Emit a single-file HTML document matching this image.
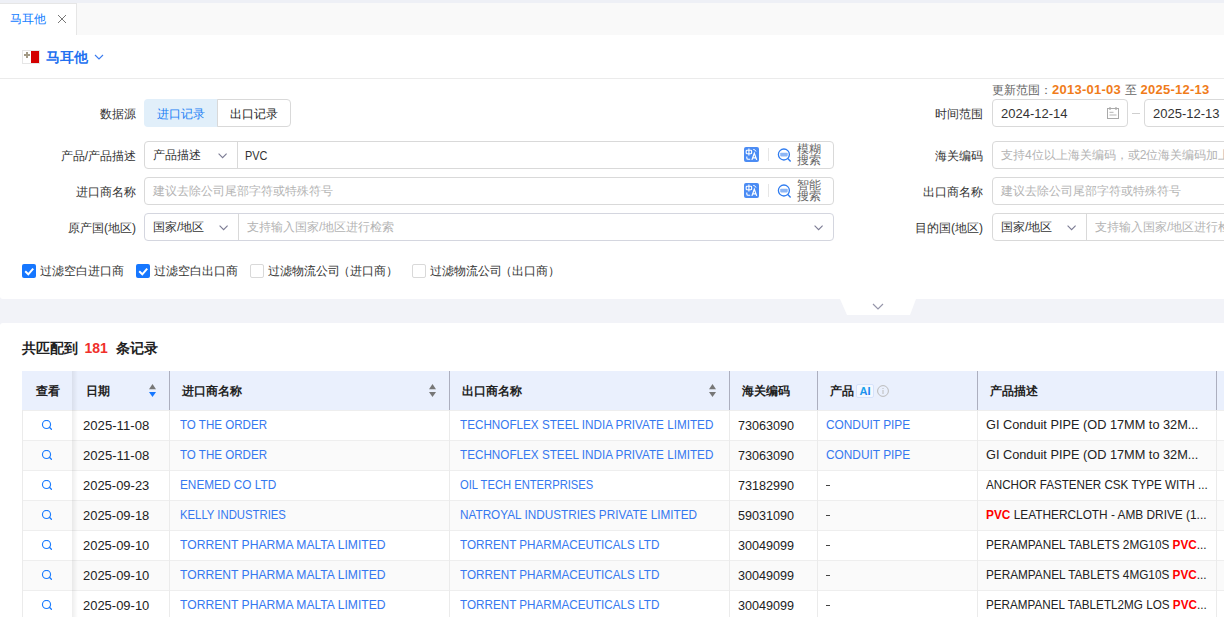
<!DOCTYPE html>
<html><head><meta charset="utf-8">
<style>
*{box-sizing:border-box;margin:0;padding:0}
html,body{width:1224px;height:617px;overflow:hidden;background:#fff}
body{position:relative;font-family:"Liberation Sans",sans-serif;font-size:12px;color:#333}
.a{position:absolute;white-space:nowrap}
.lbl{position:absolute;white-space:nowrap;font-size:12px;color:#333;line-height:14px;text-align:right}
.box{position:absolute;border:1px solid #d9d9d9;border-radius:4px;background:#fff}
.ph{color:#b3b3b3}
.chev{position:absolute;width:6px;height:6px;border-right:1px solid #999;border-bottom:1px solid #999;transform:rotate(45deg)}
.cb{position:absolute;width:14px;height:14px;border-radius:2px}
.cb.on{background:#1677ff}
.cb.off{border:1px solid #d9d9d9;background:#fff}


.tr{position:absolute;width:15px;height:15px;border-radius:2px;background:#3b82e8}
.sq{position:absolute;width:16px;height:16px}
.st{position:absolute;font-size:12px;line-height:11px;color:#666}
.cal{position:absolute;width:11px;height:12px;border:1px solid #aaa;border-radius:1px}
.t{font-size:13px;line-height:15px;transform-origin:0 0}
.th{font-size:12px;line-height:14px;font-weight:700;color:#222}
</style></head><body>

<!-- top tab strip -->
<div class="a" style="left:0;top:0;width:1224px;height:3px;background:#eef0f6"></div>
<div class="a" style="left:0;top:3px;width:1224px;height:32px;background:#f9f9f9"></div>
<div class="a" style="left:0;top:3px;width:77px;height:32px;background:#fff;border-right:1px solid #e6e6e6;border-top:1px solid #e6e6e6"></div>
<div class="a" style="left:10px;top:12px;font-size:12px;line-height:14px;color:#0f7bff">马耳他</div>
<svg class="a" style="left:57px;top:14px" width="10" height="10"><path d="M1 1 L9 9 M9 1 L1 9" stroke="#777" stroke-width="1"/></svg>

<!-- header -->
<div class="a" style="left:22px;top:50px;width:18px;height:14px;background:#fff;border:1px solid #e6e6e6"></div>
<div class="a" style="left:31px;top:51px;width:8px;height:12px;background:#d40000"></div>
<div class="a" style="left:25.5px;top:52px;width:2px;height:6px;background:#a39a86"></div>
<div class="a" style="left:23.5px;top:54px;width:6px;height:2px;background:#a39a86"></div>
<svg class="a" style="left:94px;top:54px" width="10" height="7"><path d="M1 1 L5 5 L9 1" stroke="#3a7cf0" stroke-width="1.1" fill="none"/></svg>
<div class="a" style="left:46px;top:49px;font-size:14px;line-height:16px;font-weight:700;color:#2270f0">马耳他</div>
<div class="a" style="left:0;top:78px;width:1224px;height:1px;background:#ebebeb"></div>


<!-- FORM -->
<div class="lbl" style="right:1088px;top:106.5px">数据源</div>
<div class="a" style="left:144px;top:99px;width:74px;height:28px;background:#e1effa;border-radius:4px 0 0 4px"></div>
<div class="a" style="left:217px;top:99px;width:74px;height:28px;border:1px solid #d9d9d9;border-radius:0 4px 4px 0;background:#fff"></div>
<div class="a" style="left:157px;top:106.5px;line-height:14px;color:#1a80f5">进口记录</div>
<div class="a" style="left:230px;top:106.5px;line-height:14px;color:#222">出口记录</div>

<div class="lbl" style="right:1088px;top:148.5px">产品/产品描述</div>
<div class="box" style="left:144px;top:141px;width:690px;height:28px">
  <div class="a" style="left:8px;top:6px;line-height:14px;color:#333">产品描述</div>
  <svg class="a" style="left:72.5px;top:10.5px" width="10" height="6"><path d="M0.6 0.6 L4.6 4.6 L8.6 0.6" stroke="#7c7c94" stroke-width="1.1" fill="none"/></svg>
  <div class="a" style="left:92px;top:0;width:1px;height:26px;background:#d9d9d9"></div>
  <div class="a" style="left:100px;top:6px;line-height:15px;font-size:13px;color:#333;transform:scaleX(0.84);transform-origin:0 0">PVC</div>
  <svg class="a" style="left:599px;top:5px" width="15" height="15"><rect x="0" y="0" width="15" height="15" rx="2" fill="#4b8cf4"/><rect x="2.2" y="3.3" width="5.4" height="3.4" rx="0.8" fill="none" stroke="#fff" stroke-width="1.1"/><path d="M4.9 1.6 V8.6" stroke="#fff" stroke-width="1.1"/><path d="M2.8 9.6 V10.9 Q2.8 12.2 4.1 12.2 H6.2" stroke="#fff" stroke-width="1.1" fill="none"/><path d="M7.9 12.9 L10.3 6.3 L12.7 12.9 M8.7 10.8 H11.9" stroke="#fff" stroke-width="1.25" fill="none"/><path d="M9.2 2.4 Q11.4 2.4 12 4.6" stroke="#fff" stroke-width="0.9" fill="none"/></svg>
  <div class="a" style="left:623px;top:6px;width:1px;height:13px;background:#e6e6e6"></div>
  <svg class="a" style="left:631px;top:4.5px" width="17" height="17"><circle cx="7.9" cy="7.5" r="5.5" stroke="#2f7cf0" stroke-width="1.3" fill="none"/><rect x="4.2" y="5.8" width="7.5" height="3.6" rx="0.8" fill="#8db6f5"/><path d="M11.8 11.6 L14.6 14.4" stroke="#2f7cf0" stroke-width="1.4"/></svg>
  <div class="st" style="left:652px;top:2px">模糊<br>搜索</div>
</div>

<div class="lbl" style="right:1088px;top:184.5px">进口商名称</div>
<div class="box" style="left:144px;top:177px;width:690px;height:28px">
  <div class="a ph" style="left:8px;top:6px;line-height:14px">建议去除公司尾部字符或特殊符号</div>
  <svg class="a" style="left:599px;top:5px" width="15" height="15"><rect x="0" y="0" width="15" height="15" rx="2" fill="#4b8cf4"/><rect x="2.2" y="3.3" width="5.4" height="3.4" rx="0.8" fill="none" stroke="#fff" stroke-width="1.1"/><path d="M4.9 1.6 V8.6" stroke="#fff" stroke-width="1.1"/><path d="M2.8 9.6 V10.9 Q2.8 12.2 4.1 12.2 H6.2" stroke="#fff" stroke-width="1.1" fill="none"/><path d="M7.9 12.9 L10.3 6.3 L12.7 12.9 M8.7 10.8 H11.9" stroke="#fff" stroke-width="1.25" fill="none"/><path d="M9.2 2.4 Q11.4 2.4 12 4.6" stroke="#fff" stroke-width="0.9" fill="none"/></svg>
  <div class="a" style="left:623px;top:6px;width:1px;height:13px;background:#e6e6e6"></div>
  <svg class="a" style="left:631px;top:4.5px" width="17" height="17"><circle cx="7.9" cy="7.5" r="5.5" stroke="#2f7cf0" stroke-width="1.3" fill="none"/><rect x="4.2" y="5.8" width="7.5" height="3.6" rx="0.8" fill="#8db6f5"/><path d="M11.8 11.6 L14.6 14.4" stroke="#2f7cf0" stroke-width="1.4"/></svg>
  <div class="st" style="left:652px;top:2px">智能<br>搜索</div>
</div>

<div class="lbl" style="right:1088px;top:220.5px">原产国(地区)</div>
<div class="box" style="left:144px;top:213px;width:690px;height:28px;border-color:#d4d6df">
  <div class="a" style="left:8px;top:6px;line-height:14px;color:#333">国家/地区</div>
  <svg class="a" style="left:73.5px;top:10.5px" width="10" height="6"><path d="M0.6 0.6 L4.6 4.6 L8.6 0.6" stroke="#7c7c94" stroke-width="1.1" fill="none"/></svg>
  <div class="a" style="left:93px;top:0;width:1px;height:26px;background:#d9d9d9"></div>
  <div class="a ph" style="left:102px;top:6px;line-height:14px">支持输入国家/地区进行检索</div>
  <svg class="a" style="left:668.5px;top:10.5px" width="10" height="6"><path d="M0.6 0.6 L4.6 4.6 L8.6 0.6" stroke="#7c7c94" stroke-width="1.1" fill="none"/></svg>
</div>

<!-- right column -->
<div class="a" style="left:992px;top:83px;line-height:14px;color:#666">更新范围<span style="margin-right:-4px">：</span></div>
<div class="a" style="left:1052px;top:82px;line-height:15px;font-size:13px;font-weight:700;color:#f07c1a;letter-spacing:0.25px">2013-01-03</div>
<div class="a" style="left:1125px;top:83px;line-height:14px;color:#666">至</div>
<div class="a" style="left:1140.5px;top:82px;line-height:15px;font-size:13px;font-weight:700;color:#f07c1a;letter-spacing:0.25px">2025-12-13</div>
<div class="lbl" style="right:241px;top:106.5px">时间范围</div>
<div class="box" style="left:992px;top:99px;width:136px;height:28px">
  <div class="a" style="left:8px;top:7px;line-height:14px;font-size:13px;color:#333">2024-12-14</div>
  <svg class="a" style="left:114px;top:7px" width="13" height="13"><rect x="0.5" y="1.5" width="11" height="10" fill="none" stroke="#aaa" stroke-width="1"/><path d="M3 0 V3 M9 0 V3" stroke="#aaa" stroke-width="1.2"/><path d="M2.5 5.3 H6.5 M2.5 8 H9.5" stroke="#b5b5b5" stroke-width="1"/></svg>
</div>
<div class="a" style="left:1132px;top:113px;width:8px;height:1px;background:#cfcfcf"></div>
<div class="box" style="left:1144px;top:99px;width:140px;height:28px">
  <div class="a" style="left:8px;top:7px;line-height:14px;font-size:13px;color:#333">2025-12-13</div>
</div>

<div class="lbl" style="right:241px;top:148.5px">海关编码</div>
<div class="box" style="left:992px;top:141px;width:300px;height:28px">
  <div class="a ph" style="left:8px;top:6px;line-height:14px">支持4位以上海关编码，或2位海关编码加上产品描述</div>
</div>
<div class="lbl" style="right:241px;top:184.5px">出口商名称</div>
<div class="box" style="left:992px;top:177px;width:300px;height:28px">
  <div class="a ph" style="left:8px;top:6px;line-height:14px">建议去除公司尾部字符或特殊符号</div>
</div>
<div class="lbl" style="right:241px;top:220.5px">目的国(地区)</div>
<div class="box" style="left:992px;top:213px;width:300px;height:28px">
  <div class="a" style="left:8px;top:6px;line-height:14px;color:#333">国家/地区</div>
  <svg class="a" style="left:73.5px;top:10.5px" width="10" height="6"><path d="M0.6 0.6 L4.6 4.6 L8.6 0.6" stroke="#7c7c94" stroke-width="1.1" fill="none"/></svg>
  <div class="a" style="left:93px;top:0;width:1px;height:26px;background:#d9d9d9"></div>
  <div class="a ph" style="left:102px;top:6px;line-height:14px">支持输入国家/地区进行检索</div>
</div>

<!-- checkboxes -->
<svg class="a" style="left:22px;top:264px" width="14" height="14"><rect width="14" height="14" rx="2" fill="#1677ff"/><path d="M3.2 7.3 L6.3 10.3 L11.2 4.6" stroke="#fff" stroke-width="2" fill="none"/></svg>
<div class="a" style="left:40px;top:264px;line-height:14px;color:#333">过滤空白进口商</div>
<svg class="a" style="left:136px;top:264px" width="14" height="14"><rect width="14" height="14" rx="2" fill="#1677ff"/><path d="M3.2 7.3 L6.3 10.3 L11.2 4.6" stroke="#fff" stroke-width="2" fill="none"/></svg>
<div class="a" style="left:154px;top:264px;line-height:14px;color:#333">过滤空白出口商</div>
<div class="cb off" style="left:250px;top:264px"></div>
<div class="a" style="left:268px;top:264px;line-height:14px;color:#333">过滤物流公司<span style="margin-left:-2px">（</span>进口商）</div>
<div class="cb off" style="left:412px;top:264px"></div>
<div class="a" style="left:430px;top:264px;line-height:14px;color:#333">过滤物流公司<span style="margin-left:-2px">（</span>出口商）</div>

<!-- gray band -->
<div class="a" style="left:0;top:295px;width:1224px;height:32px;background:#f2f3f8"></div>
<div class="a" style="left:0;top:291px;width:1230px;height:8px;background:#fff;border-radius:0 0 0 3px"></div>
<div class="a" style="left:0;top:323px;width:1230px;height:8px;background:#fff;border-radius:3px 0 0 0"></div>
<svg class="a" style="left:838px;top:299px" width="80" height="17"><path d="M2 0 L78 0 L72 16 L9 16 Z" fill="#fff"/><path d="M35 5 L40 10 L45 5" stroke="#9696aa" stroke-width="1.2" fill="none"/></svg>


<!-- results panel -->
<div class="a" style="left:22px;top:340px;font-size:14px;line-height:16px;font-weight:700;color:#222">共匹配到</div>
<div class="a" style="left:84.5px;top:340px;font-size:14px;line-height:16px;font-weight:700;color:#f0302a">181</div>
<div class="a" style="left:116px;top:340px;font-size:14px;line-height:16px;font-weight:700;color:#222">条记录</div>

<!-- table header -->
<div class="a" style="left:22px;top:371px;width:1202px;height:39px;background:#eaf0fd"></div>
<!--ROWS-->
<div class="a" style="left:22px;top:411px;width:1202px;height:30px;background:#fff;border-bottom:1px solid #eeeeee"></div>
<svg class="a" style="left:41px;top:420px" width="12" height="11"><circle cx="5.5" cy="4.4" r="4.05" stroke="#1a7cff" stroke-width="1.15" fill="none"/><path d="M8.4 7.3 L10.4 9.3" stroke="#1a7cff" stroke-width="1.3" stroke-linecap="round"/></svg>
<div class="a t" style="left:82.5px;top:418px;color:#222;transform:scaleX(1.011)">2025-11-08</div>
<div class="a t" style="left:180.3px;top:417px;color:#3578f0;transform:scaleX(0.890)">TO THE ORDER</div>
<div class="a t" style="left:460.3px;top:417px;color:#3578f0;transform:scaleX(0.900)">TECHNOFLEX STEEL INDIA PRIVATE LIMITED</div>
<div class="a t" style="left:738.2px;top:418px;color:#222;transform:scaleX(0.970)">73063090</div>
<div class="a t" style="left:826.2px;top:417px;color:#3578f0;transform:scaleX(0.913)">CONDUIT PIPE</div>
<div class="a t" style="left:986.3px;top:417px;color:#222;transform:scaleX(0.980)">GI Conduit PIPE (OD 17MM to 32M...</div>
<div class="a" style="left:22px;top:441px;width:1202px;height:30px;background:#fafafa;border-bottom:1px solid #eeeeee"></div>
<svg class="a" style="left:41px;top:450px" width="12" height="11"><circle cx="5.5" cy="4.4" r="4.05" stroke="#1a7cff" stroke-width="1.15" fill="none"/><path d="M8.4 7.3 L10.4 9.3" stroke="#1a7cff" stroke-width="1.3" stroke-linecap="round"/></svg>
<div class="a t" style="left:82.5px;top:448px;color:#222;transform:scaleX(1.011)">2025-11-08</div>
<div class="a t" style="left:180.3px;top:447px;color:#3578f0;transform:scaleX(0.890)">TO THE ORDER</div>
<div class="a t" style="left:460.3px;top:447px;color:#3578f0;transform:scaleX(0.900)">TECHNOFLEX STEEL INDIA PRIVATE LIMITED</div>
<div class="a t" style="left:738.2px;top:448px;color:#222;transform:scaleX(0.970)">73063090</div>
<div class="a t" style="left:826.2px;top:447px;color:#3578f0;transform:scaleX(0.913)">CONDUIT PIPE</div>
<div class="a t" style="left:986.3px;top:447px;color:#222;transform:scaleX(0.980)">GI Conduit PIPE (OD 17MM to 32M...</div>
<div class="a" style="left:22px;top:471px;width:1202px;height:30px;background:#fff;border-bottom:1px solid #eeeeee"></div>
<svg class="a" style="left:41px;top:480px" width="12" height="11"><circle cx="5.5" cy="4.4" r="4.05" stroke="#1a7cff" stroke-width="1.15" fill="none"/><path d="M8.4 7.3 L10.4 9.3" stroke="#1a7cff" stroke-width="1.3" stroke-linecap="round"/></svg>
<div class="a t" style="left:82.5px;top:478px;color:#222;transform:scaleX(0.997)">2025-09-23</div>
<div class="a t" style="left:180.3px;top:477px;color:#3578f0;transform:scaleX(0.908)">ENEMED CO LTD</div>
<div class="a t" style="left:460.3px;top:477px;color:#3578f0;transform:scaleX(0.862)">OIL TECH ENTERPRISES</div>
<div class="a t" style="left:738.2px;top:478px;color:#222;transform:scaleX(0.970)">73182990</div>
<div class="a" style="left:826px;top:485px;width:4px;height:1px;background:#444"></div>
<div class="a t" style="left:986.3px;top:477px;color:#222;transform:scaleX(0.896)">ANCHOR FASTENER CSK TYPE WITH ...</div>
<div class="a" style="left:22px;top:501px;width:1202px;height:30px;background:#fafafa;border-bottom:1px solid #eeeeee"></div>
<svg class="a" style="left:41px;top:510px" width="12" height="11"><circle cx="5.5" cy="4.4" r="4.05" stroke="#1a7cff" stroke-width="1.15" fill="none"/><path d="M8.4 7.3 L10.4 9.3" stroke="#1a7cff" stroke-width="1.3" stroke-linecap="round"/></svg>
<div class="a t" style="left:82.5px;top:508px;color:#222;transform:scaleX(0.997)">2025-09-18</div>
<div class="a t" style="left:180.3px;top:507px;color:#3578f0;transform:scaleX(0.871)">KELLY INDUSTRIES</div>
<div class="a t" style="left:460.3px;top:507px;color:#3578f0;transform:scaleX(0.904)">NATROYAL INDUSTRIES PRIVATE LIMITED</div>
<div class="a t" style="left:738.2px;top:508px;color:#222;transform:scaleX(0.970)">59031090</div>
<div class="a" style="left:826px;top:515px;width:4px;height:1px;background:#444"></div>
<div class="a t" style="left:986.3px;top:507px;color:#222;transform:scaleX(0.912)"><b style="color:#f00">PVC</b> LEATHERCLOTH - AMB DRIVE (1...</div>
<div class="a" style="left:22px;top:531px;width:1202px;height:30px;background:#fff;border-bottom:1px solid #eeeeee"></div>
<svg class="a" style="left:41px;top:540px" width="12" height="11"><circle cx="5.5" cy="4.4" r="4.05" stroke="#1a7cff" stroke-width="1.15" fill="none"/><path d="M8.4 7.3 L10.4 9.3" stroke="#1a7cff" stroke-width="1.3" stroke-linecap="round"/></svg>
<div class="a t" style="left:82.5px;top:538px;color:#222;transform:scaleX(0.997)">2025-09-10</div>
<div class="a t" style="left:180.3px;top:537px;color:#3578f0;transform:scaleX(0.934)">TORRENT PHARMA MALTA LIMITED</div>
<div class="a t" style="left:460.3px;top:537px;color:#3578f0;transform:scaleX(0.899)">TORRENT PHARMACEUTICALS LTD</div>
<div class="a t" style="left:738.2px;top:538px;color:#222;transform:scaleX(0.970)">30049099</div>
<div class="a" style="left:826px;top:545px;width:4px;height:1px;background:#444"></div>
<div class="a t" style="left:986.3px;top:537px;color:#222;transform:scaleX(0.905)">PERAMPANEL TABLETS 2MG10S <b style="color:#f00">PVC</b>...</div>
<div class="a" style="left:22px;top:561px;width:1202px;height:30px;background:#fafafa;border-bottom:1px solid #eeeeee"></div>
<svg class="a" style="left:41px;top:570px" width="12" height="11"><circle cx="5.5" cy="4.4" r="4.05" stroke="#1a7cff" stroke-width="1.15" fill="none"/><path d="M8.4 7.3 L10.4 9.3" stroke="#1a7cff" stroke-width="1.3" stroke-linecap="round"/></svg>
<div class="a t" style="left:82.5px;top:568px;color:#222;transform:scaleX(0.997)">2025-09-10</div>
<div class="a t" style="left:180.3px;top:567px;color:#3578f0;transform:scaleX(0.934)">TORRENT PHARMA MALTA LIMITED</div>
<div class="a t" style="left:460.3px;top:567px;color:#3578f0;transform:scaleX(0.899)">TORRENT PHARMACEUTICALS LTD</div>
<div class="a t" style="left:738.2px;top:568px;color:#222;transform:scaleX(0.970)">30049099</div>
<div class="a" style="left:826px;top:575px;width:4px;height:1px;background:#444"></div>
<div class="a t" style="left:986.3px;top:567px;color:#222;transform:scaleX(0.905)">PERAMPANEL TABLETS 4MG10S <b style="color:#f00">PVC</b>...</div>
<div class="a" style="left:22px;top:591px;width:1202px;height:30px;background:#fff;border-bottom:1px solid #eeeeee"></div>
<svg class="a" style="left:41px;top:600px" width="12" height="11"><circle cx="5.5" cy="4.4" r="4.05" stroke="#1a7cff" stroke-width="1.15" fill="none"/><path d="M8.4 7.3 L10.4 9.3" stroke="#1a7cff" stroke-width="1.3" stroke-linecap="round"/></svg>
<div class="a t" style="left:82.5px;top:598px;color:#222;transform:scaleX(0.997)">2025-09-10</div>
<div class="a t" style="left:180.3px;top:597px;color:#3578f0;transform:scaleX(0.934)">TORRENT PHARMA MALTA LIMITED</div>
<div class="a t" style="left:460.3px;top:597px;color:#3578f0;transform:scaleX(0.899)">TORRENT PHARMACEUTICALS LTD</div>
<div class="a t" style="left:738.2px;top:598px;color:#222;transform:scaleX(0.970)">30049099</div>
<div class="a" style="left:826px;top:605px;width:4px;height:1px;background:#444"></div>
<div class="a t" style="left:986.3px;top:597px;color:#222;transform:scaleX(0.900)">PERAMPANEL TABLETL2MG LOS <b style="color:#f00">PVC</b>...</div>
<!--/ROWS-->
<div class="a" style="left:22px;top:410px;width:1202px;height:1px;background:#eeeeee"></div>
<!-- vertical body lines -->
<div class="a" style="left:22px;top:410px;width:1px;height:207px;background:#ebebeb"></div>
<div class="a" style="left:169px;top:410px;width:1px;height:207px;background:#ebebeb"></div>
<div class="a" style="left:449px;top:410px;width:1px;height:207px;background:#ebebeb"></div>
<div class="a" style="left:729px;top:410px;width:1px;height:207px;background:#ebebeb"></div>
<div class="a" style="left:817px;top:410px;width:1px;height:207px;background:#ebebeb"></div>
<div class="a" style="left:977px;top:410px;width:1px;height:207px;background:#ebebeb"></div>
<div class="a" style="left:1216px;top:410px;width:1px;height:207px;background:#ebebeb"></div>
<!-- header dividers -->
<div class="a" style="left:169px;top:371px;width:1px;height:39px;background:#acafbf"></div>
<div class="a" style="left:449px;top:371px;width:1px;height:39px;background:#acafbf"></div>
<div class="a" style="left:729px;top:371px;width:1px;height:39px;background:#acafbf"></div>
<div class="a" style="left:817px;top:371px;width:1px;height:39px;background:#acafbf"></div>
<div class="a" style="left:977px;top:371px;width:1px;height:39px;background:#acafbf"></div>
<div class="a" style="left:1216px;top:371px;width:1px;height:39px;background:#acafbf"></div>
<!-- fixed column shadow -->
<div class="a" style="left:72px;top:371px;width:6px;height:246px;background:linear-gradient(to right,rgba(0,0,0,0.07),rgba(0,0,0,0))"></div>
<!-- header text -->
<div class="a th" style="left:36px;top:384px">查看</div>
<div class="a th" style="left:86px;top:384px">日期</div>
<svg class="a" style="left:149px;top:384px" width="7" height="13"><path d="M0 5.2 L3.5 0 L7 5.2 Z" fill="#777"/><path d="M0 8 L3.5 13 L7 8 Z" fill="#1677ff"/></svg>
<div class="a th" style="left:182px;top:384px">进口商名称</div>
<svg class="a" style="left:429px;top:384px" width="7" height="13"><path d="M0 5.2 L3.5 0 L7 5.2 Z" fill="#777"/><path d="M0 8 L3.5 13 L7 8 Z" fill="#777"/></svg>
<div class="a th" style="left:462px;top:384px">出口商名称</div>
<svg class="a" style="left:709px;top:384px" width="7" height="13"><path d="M0 5.2 L3.5 0 L7 5.2 Z" fill="#777"/><path d="M0 8 L3.5 13 L7 8 Z" fill="#777"/></svg>
<div class="a th" style="left:742px;top:384px">海关编码</div>
<div class="a th" style="left:830px;top:384px">产品</div>
<svg class="a" style="left:856px;top:384px" width="18" height="14"><defs><linearGradient id="aig" x1="0" y1="0" x2="1" y2="1"><stop offset="0" stop-color="#19c3e6"/><stop offset="1" stop-color="#1d5ff5"/></linearGradient></defs><rect x="0.5" y="0.5" width="17" height="13" rx="1.5" fill="#f4f8ff" stroke="#d6e2fb" stroke-width="1"/><text x="9" y="11.2" text-anchor="middle" font-family="Liberation Sans" font-weight="700" font-size="11" fill="url(#aig)">AI</text></svg>
<svg class="a" style="left:877px;top:385px" width="12" height="12"><circle cx="6" cy="6" r="5.4" stroke="#bbb" stroke-width="1" fill="none"/><rect x="5.5" y="5" width="1" height="4" fill="#bbb"/><rect x="5.5" y="3" width="1" height="1" fill="#bbb"/></svg>
<div class="a th" style="left:990px;top:384px">产品描述</div>

</body></html>
